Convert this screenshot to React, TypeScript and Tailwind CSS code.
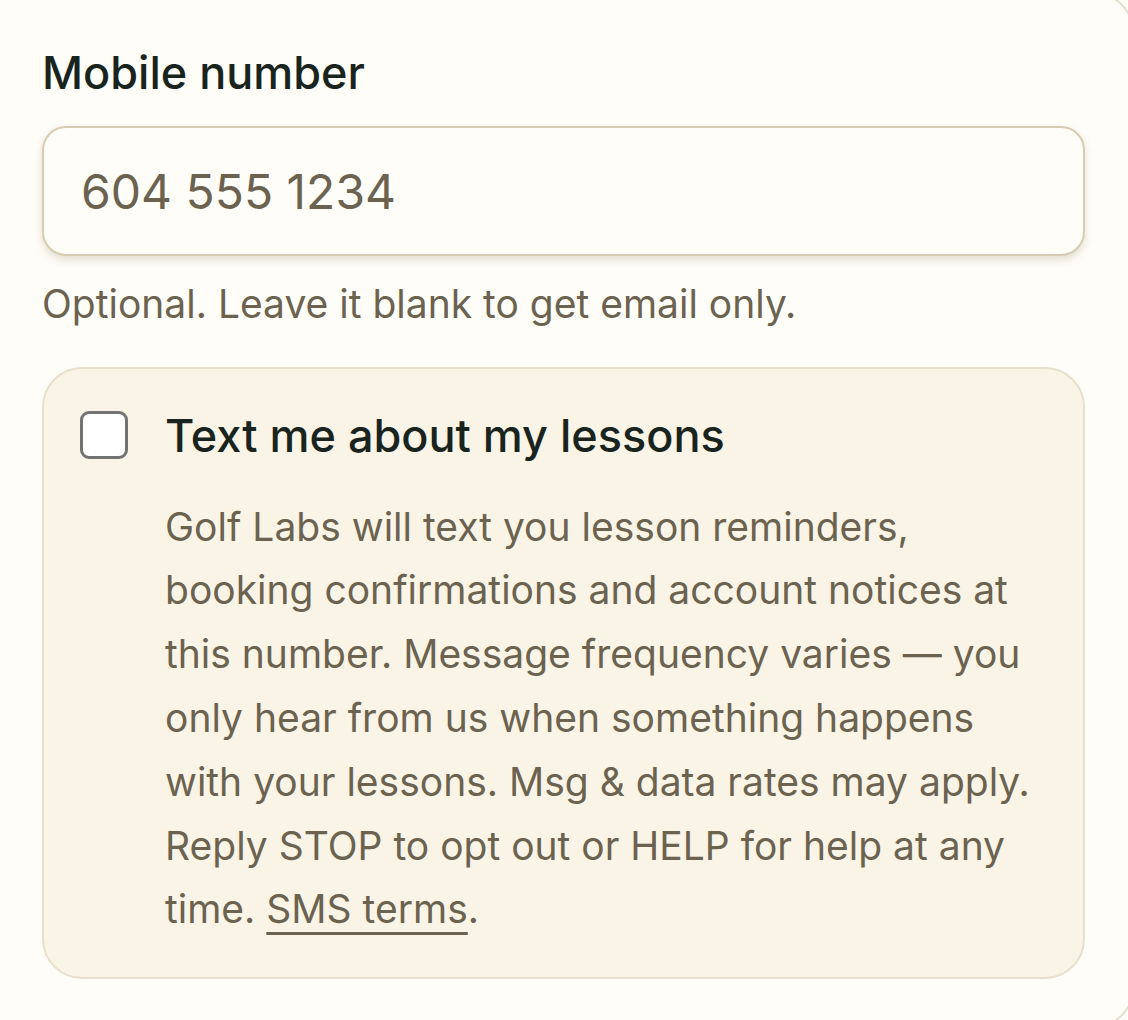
import { useState } from "react";

const App = () => {
  const [phone, setPhone] = useState("");
  const [textMe, setTextMe] = useState(false);

  return (
    <div
      className="min-h-screen w-full overflow-hidden bg-[#fffdf8]"
      style={{ fontFamily: "Inter, 'Noto Sans', sans-serif" }}
    >
      <div className="-ml-[40px] -mr-[6px] -mt-[8px] h-[1036px] rounded-[40px] border-2 border-[#e6dfd0] bg-[#fffdf8] pl-[80px] pr-[47px] pt-[52px]">
        <label htmlFor="phone" className="block text-[45px] font-medium leading-[1.2] text-[#18241d]">
          Mobile number
        </label>
        <input
          id="phone"
          type="tel"
          value={phone}
          onChange={(e) => setPhone(e.target.value)}
          placeholder="604 555 1234"
          className="mt-[26px] h-[130px] w-full rounded-[24px] border-2 border-[#d9cbb2] bg-[#fffdf7] px-[37px] text-[48px] text-[#6b624f] shadow-[0_4px_8px_rgba(120,100,60,0.2)] outline-none placeholder:text-[#6b624f]"
        />
        <p className="mt-[21px] text-[39px] leading-[1.4] text-[#6b624f]">Optional. Leave it blank to get email only.</p>

        <div className="mt-[35px] rounded-[40px] border-2 border-[#e8dfcc] bg-[#faf4e7] pb-[36px] pl-[36px] pr-[30px] pt-[40px]">
          <label className="flex cursor-pointer items-start gap-[37px]">
            <input
              type="checkbox"
              checked={textMe}
              onChange={(e) => setTextMe(e.target.checked)}
              className="mt-[2px] size-[48px] shrink-0 appearance-none rounded-[9px] border-[3px] border-[#737373] bg-white checked:bg-[#18241d]"
            />
            <span className="text-[45px] font-medium leading-[1.2] text-[#18241d]">Text me about my lessons</span>
          </label>
          <p className="ml-[85px] mt-[32px] text-[39px] leading-[63.8px] text-[#6b624f]">
            Golf Labs will text you lesson reminders, booking confirmations and account notices at this number. Message
            frequency varies — you only hear from us when something happens with your lessons. Msg &amp; data rates may
            apply. Reply STOP to opt out or HELP for help at any time.{" "}
            <a href="#" className="underline decoration-[3px] underline-offset-[9px]">
              SMS terms
            </a>
            .
          </p>
        </div>
      </div>
    </div>
  );
};

export default App;
